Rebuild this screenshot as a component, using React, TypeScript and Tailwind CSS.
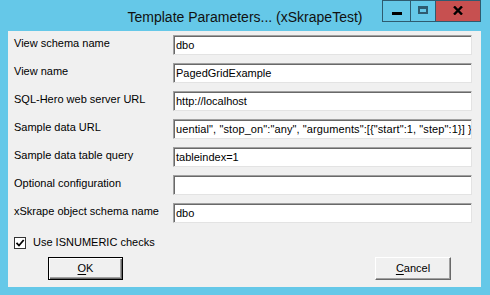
import React from 'react';

const fields = [
  { label: 'View schema name', value: 'dbo' },
  { label: 'View name', value: 'PagedGridExample' },
  { label: 'SQL-Hero web server URL', value: 'http://localhost' },
  {
    label: 'Sample data URL',
    value: 'uential", "stop_on":"any", "arguments":[{"start":1, "step":1}] }',
    scrolled: true,
  },
  { label: 'Sample data table query', value: 'tableindex=1' },
  { label: 'Optional configuration', value: '' },
  { label: 'xSkrape object schema name', value: 'dbo' },
];

const CaptionButtons = () => (
  <div className="absolute top-0 left-[382px] flex h-[22px] border border-[#2e5b70]">
    {/* minimize */}
    <div className="w-[28px] flex items-center justify-center border-r border-[#2e5b70]">
      <div className="w-[10px] h-[3px] bg-black mt-[4px]" />
    </div>
    {/* maximize */}
    <div className="w-[25px] flex items-center justify-center border-r border-[#2e5b70]">
      <div className="w-[10px] h-[8px] border-2 border-t-[3px] border-[#2e5b70] -mt-[2px]" />
    </div>
    {/* close */}
    <div className="w-[44px] bg-[#c75050] flex items-center justify-center">
      <svg width="10" height="9" viewBox="0 0 10 9" className="-mt-[2px]">
        <path d="M1 0.5 L9 8.5 M9 0.5 L1 8.5" stroke="#000" strokeWidth="2.4" />
      </svg>
    </div>
  </div>
);

const Field = ({ label, value, scrolled }: { label: string; value: string; scrolled?: boolean }) => (
  <div className="flex h-[20px]">
    <div className="w-[159px] text-[11px] text-black">{label}</div>
    <div
      className={`w-[299px] h-[20px] bg-white border-t border-l border-[#a0a0a0] border-r border-b border-r-[#e3e3e3] border-b-[#e3e3e3] shadow-[inset_1px_1px_0_#696969] flex items-center justify-start pl-[2px] pr-[1px] overflow-hidden whitespace-nowrap text-[11px] text-black ${
        scrolled ? 'tracking-[0.1px]' : ''
      }`}
    >
      <span className="pt-[1px]">{value}</span>
    </div>
  </div>
);

export default function App() {
  return (
    <div className="w-[490px] h-[295px] bg-[#65c8e8] flex flex-col font-['Liberation_Sans',Arial,sans-serif] overflow-hidden">
      {/* Title bar */}
      <div className="relative h-[31px] shrink-0">
        <div className="text-center text-[14px] text-[#111] pt-[7px]">Template Parameters... (xSkrapeTest)</div>
        <CaptionButtons />
      </div>

      {/* Client area */}
      <div className="flex-1 ml-[8px] mr-[9px] mb-[8px] bg-[#f0f0f0] pt-[4px] pl-[6px]">
        <div className="flex flex-col gap-[8px]">
          {fields.map((f) => (
            <Field key={f.label} label={f.label} value={f.value} scrolled={f.scrolled} />
          ))}
        </div>

        <div className="flex items-center h-[13px] mt-[13px] text-[11px] text-black">
          <div className="w-[12px] h-[12px] bg-white border border-[#333] flex items-center justify-center">
            <svg width="10" height="10" viewBox="0 0 10 10">
              <path d="M1.5 4.8 L4 7.5 L8.7 2" fill="none" stroke="#000" strokeWidth="1.8" />
            </svg>
          </div>
          <span className="ml-[7px]">Use ISNUMERIC checks</span>
        </div>

        <div className="flex mt-[8px] text-[11px] text-black">
          <button className="ml-[34px] w-[75px] h-[23px] bg-[#f0f0f0] border border-black shadow-[inset_1px_1px_0_#fff,inset_-1px_-1px_0_#696969,inset_-2px_-2px_0_#a0a0a0] flex items-center justify-center">
            <span>
              <span className="underline underline-offset-2">O</span>K
            </span>
          </button>
          <button className="ml-[252px] w-[76px] h-[23px] bg-[#f0f0f0] border border-t-white border-l-white border-r-[#696969] border-b-[#696969] shadow-[inset_-1px_-1px_0_#a0a0a0] flex items-center justify-center">
            <span>
              <span className="underline underline-offset-2">C</span>ancel
            </span>
          </button>
        </div>
      </div>
    </div>
  );
}
